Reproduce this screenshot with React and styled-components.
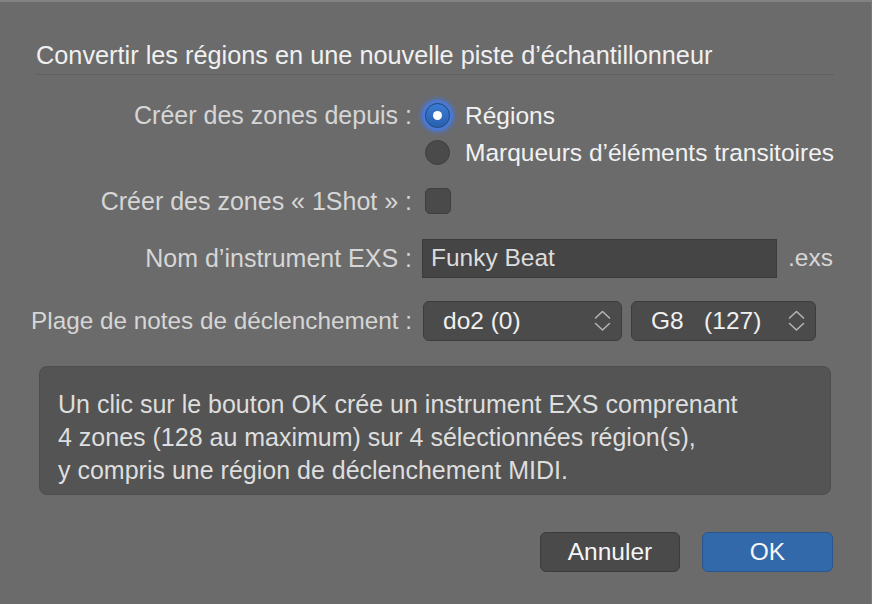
import styled, { createGlobalStyle } from 'styled-components';

const GlobalStyle = createGlobalStyle`
    html, body {
        margin: 0;
        padding: 0;
        background: #6b6b6b;
    }
    body {
        font-family: "Liberation Sans", Arial, sans-serif;
        -webkit-font-smoothing: antialiased;
    }
`

const Dialog = styled.div`
    width: 872px;
    height: 604px;
    box-sizing: border-box;
    background-color: #6b6b6b;
    border-top: 2px solid #828282;
    border-right: 1px solid #7a7a7a;
    padding: 38px 37px 0 36px;
    display: flex;
    flex-direction: column;
`

const Title = styled.div`
    font-size: 25.3px;
    color: #f0f0f0;
    line-height: 30px;
    padding-bottom: 4px;
    border-bottom: 1px solid #606060;
    white-space: nowrap;
`

const Form = styled.div`
    display: grid;
    grid-template-columns: 400px 1fr;
    column-gap: 11px;
    margin-left: -24px;
    margin-top: 22px;
`

const Label = styled.div`
    text-align: right;
    font-size: ${p => p.size || 25}px;
    color: #d6d6d6;
    height: ${p => p.h || 40}px;
    line-height: ${p => p.h || 40}px;
    margin-top: ${p => p.mt || 0}px;
    white-space: nowrap;
`

const Field = styled.div`
    display: flex;
    align-items: ${p => p.top ? 'flex-start' : 'center'};
    flex-direction: ${p => p.column ? 'column' : 'row'};
    min-height: ${p => p.h || 40}px;
    margin-top: ${p => p.mt || 0}px;
`

const Option = styled.div`
    display: flex;
    align-items: center;
    height: 37px;
    gap: 15px;
    font-size: 24.5px;
    color: #f2f2f2;
    white-space: nowrap;
`

const Radio = styled.div`
    width: 25px;
    height: 25px;
    margin-left: 2px;
    border-radius: 50%;
    box-sizing: border-box;
    flex-shrink: 0;
    display: flex;
    align-items: center;
    justify-content: center;
    background: ${p => p.checked ? 'linear-gradient(#3b7cd2, #2960b0)' : '#4a4a4a'};
    border: 1px solid ${p => p.checked ? '#1d4a8c' : '#3e3e3e'};
    box-shadow: ${p => p.checked
        ? '0 0 0 3px rgba(74, 120, 214, 0.95), 0 0 3px 6px rgba(74, 120, 214, 0.45)'
        : 'none'};

    &::after {
        content: '';
        display: ${p => p.checked ? 'block' : 'none'};
        width: 9px;
        height: 9px;
        border-radius: 50%;
        background: #ffffff;
    }
`

const Checkbox = styled.div`
    width: 26px;
    height: 26px;
    margin-left: 2px;
    box-sizing: border-box;
    border-radius: 5px;
    background: #4a4a4a;
    border: 1px solid #3e3e3e;
`

const TextInput = styled.div`
    width: 355px;
    height: 39px;
    margin-left: -1px;
    box-sizing: border-box;
    background: #454545;
    border: 1px solid #3c3c3c;
    padding-left: 8px;
    display: flex;
    align-items: center;
    font-size: 24.5px;
    color: #dcdcdc;
`

const Suffix = styled.span`
    font-size: 24.5px;
    color: #d6d6d6;
    margin-left: 11px;
`

const Select = styled.div`
    width: ${p => p.w}px;
    height: 40px;
    box-sizing: border-box;
    background: #4b4b4b;
    border: 1px solid #3c3c3c;
    border-radius: 6px;
    padding: 0 10px 0 19px;
    display: flex;
    align-items: center;
    justify-content: space-between;
    font-size: 24.5px;
    color: #f0f0f0;
    white-space: pre;
    margin-right: 9px;
`

const InfoBox = styled.div`
    margin: 25px 3px 0 3px;
    height: 129px;
    box-sizing: border-box;
    background: #545454;
    border: 1px solid #4d4d4d;
    border-radius: 8px;
    padding: 21px 18px 0 18px;
    font-size: 25px;
    line-height: 33px;
    color: #dedede;
    white-space: nowrap;
`

const Buttons = styled.div`
    display: flex;
    justify-content: flex-end;
    gap: 22px;
    margin-top: 37px;
    margin-right: 1px;
`

const Button = styled.div`
    width: ${p => p.w}px;
    height: 40px;
    box-sizing: border-box;
    border-radius: 6px;
    display: flex;
    align-items: center;
    justify-content: center;
    font-size: 24.5px;
    color: #f5f5f5;
    background: ${p => p.primary ? '#3269aa' : '#4a4a4a'};
    border: 1px solid ${p => p.primary ? '#28568e' : '#3c3c3c'};
`

const Chevrons = () => (
    <svg width="17" height="26" viewBox="0 0 17 26" fill="none" stroke="#b6b6b6" strokeWidth="1.5" strokeLinecap="round" strokeLinejoin="round">
        <path d="M1.5 10 L8.5 3.5 L15.5 10" />
        <path d="M1.5 15.5 L8.5 22 L15.5 15.5" />
    </svg>
)

const App = () => {
    return (
        <>
            <GlobalStyle />
            <Dialog>
                <Title>Convertir les régions en une nouvelle piste d’échantillonneur</Title>
                <Form>
                    <Label h={37}>Créer des zones depuis :</Label>
                    <Field column top>
                        <Option><Radio checked />Régions</Option>
                        <Option><Radio />Marqueurs d’éléments transitoires</Option>
                    </Field>

                    <Label mt={10}>Créer des zones « 1Shot » :</Label>
                    <Field mt={10}><Checkbox /></Field>

                    <Label mt={17}>Nom d’instrument EXS :</Label>
                    <Field mt={17}>
                        <TextInput>Funky Beat</TextInput>
                        <Suffix>.exs</Suffix>
                    </Field>

                    <Label mt={23} size={24.3}>Plage de notes de déclenchement :</Label>
                    <Field mt={23}>
                        <Select w={199}>do2 (0)<Chevrons /></Select>
                        <Select w={185}>G8   (127)<Chevrons /></Select>
                    </Field>
                </Form>
                <InfoBox>
                    Un clic sur le bouton OK crée un instrument EXS comprenant<br />
                    4 zones (128 au maximum) sur 4 sélectionnées région(s),<br />
                    y compris une région de déclenchement MIDI.
                </InfoBox>
                <Buttons>
                    <Button w={140}>Annuler</Button>
                    <Button primary w={131}>OK</Button>
                </Buttons>
            </Dialog>
        </>
    )
}

export default App
